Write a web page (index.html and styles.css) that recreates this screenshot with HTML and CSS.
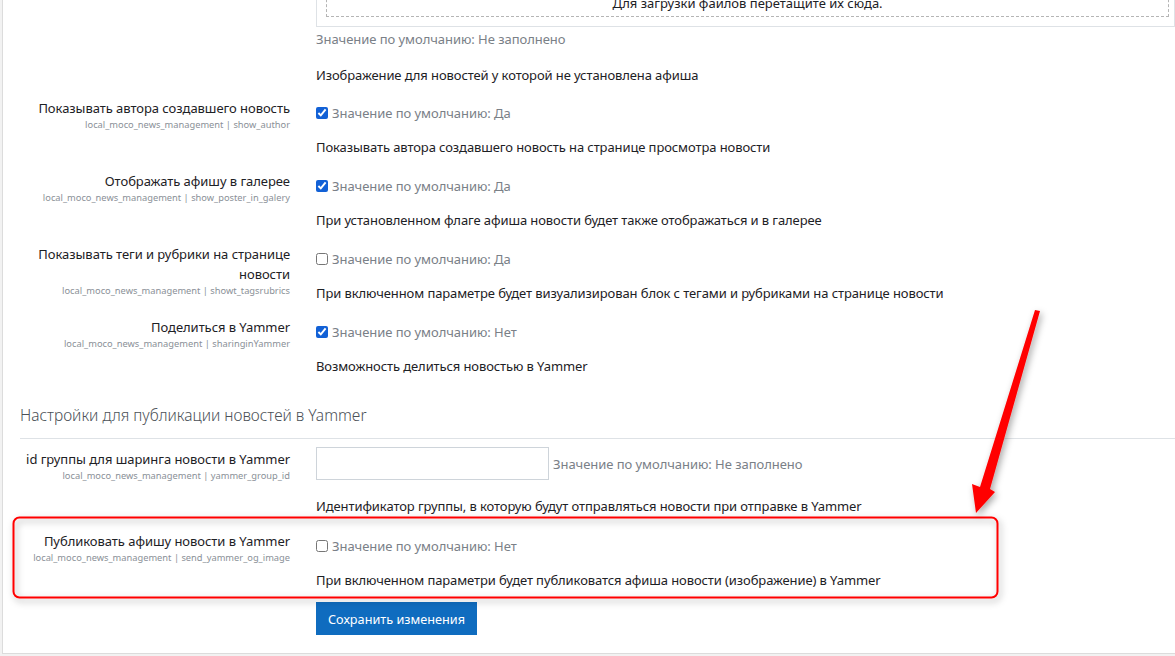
FILE: index.html
```html
<!DOCTYPE html>
<html lang="ru">
<head>
<meta charset="utf-8">
<title>Настройки новостей</title>
<link rel="stylesheet" href="styles.css">
</head>
<body>
<div class="card">
  <div class="setting setting-file">
    <div class="s-label"></div>
    <div class="s-body">
      <div class="filemanager">
        <div class="fm-drop"><span>Для загрузки файлов перетащите их сюда.</span></div>
      </div>
      <div class="default plain">Значение по умолчанию: Не заполнено</div>
      <div class="desc desc-file">Изображение для новостей у которой не установлена афиша</div>
    </div>
  </div>

  <div class="setting">
    <div class="s-label">
      <div class="s-title">Показывать автора создавшего новость</div>
      <div class="s-key">local_moco_news_management | show_author</div>
    </div>
    <div class="s-body">
      <label class="control"><input type="checkbox" checked><span class="default">Значение по умолчанию: Да</span></label>
      <div class="desc">Показывать автора создавшего новость на странице просмотра новости</div>
    </div>
  </div>

  <div class="setting">
    <div class="s-label">
      <div class="s-title">Отображать афишу в галерее</div>
      <div class="s-key">local_moco_news_management | show_poster_in_galery</div>
    </div>
    <div class="s-body">
      <label class="control"><input type="checkbox" checked><span class="default">Значение по умолчанию: Да</span></label>
      <div class="desc">При установленном флаге афиша новости будет также отображаться и в галерее</div>
    </div>
  </div>

  <div class="setting">
    <div class="s-label">
      <div class="s-title">Показывать теги и рубрики на странице новости</div>
      <div class="s-key">local_moco_news_management | showt_tagsrubrics</div>
    </div>
    <div class="s-body">
      <label class="control"><input type="checkbox"><span class="default">Значение по умолчанию: Да</span></label>
      <div class="desc">При включенном параметре будет визуализирован блок с тегами и рубриками на странице новости</div>
    </div>
  </div>

  <div class="setting">
    <div class="s-label">
      <div class="s-title">Поделиться в Yammer</div>
      <div class="s-key">local_moco_news_management | sharinginYammer</div>
    </div>
    <div class="s-body">
      <label class="control"><input type="checkbox" checked><span class="default">Значение по умолчанию: Нет</span></label>
      <div class="desc">Возможность делиться новостью в Yammer</div>
    </div>
  </div>

  <h3 class="section-title">Настройки для публикации новостей в Yammer</h3>
  <div class="section-rule"></div>

  <div class="setting setting-text">
    <div class="s-label">
      <div class="s-title">id группы для шаринга новости в Yammer</div>
      <div class="s-key">local_moco_news_management | yammer_group_id</div>
    </div>
    <div class="s-body">
      <div class="text-control"><input type="text" class="text-input"><span class="default">Значение по умолчанию: Не заполнено</span></div>
      <div class="desc desc-text">Идентификатор группы, в которую будут отправляться новости при отправке в Yammer</div>
    </div>
  </div>

  <div class="setting setting-last">
    <div class="s-label">
      <div class="s-title">Публиковать афишу новости в Yammer</div>
      <div class="s-key">local_moco_news_management | send_yammer_og_image</div>
    </div>
    <div class="s-body">
      <label class="control"><input type="checkbox"><span class="default">Значение по умолчанию: Нет</span></label>
      <div class="desc">При включенном параметри будет публиковатся афиша новости (изображение) в Yammer</div>
    </div>
  </div>

  <div class="actions">
    <div></div>
    <div><button class="btn-save" type="button">Сохранить изменения</button></div>
  </div>
</div>

<svg class="annotation" width="1175" height="656" viewBox="0 0 1175 656" aria-hidden="true">
  <defs>
    <filter id="shadow" x="-20%" y="-20%" width="140%" height="140%">
      <feDropShadow dx="2" dy="3" stdDeviation="3.5" flood-color="#000" flood-opacity="0.35"/>
    </filter>
  </defs>
  <rect x="13.5" y="517.5" width="984" height="80" rx="6" ry="6" fill="none" stroke="#ff0000" stroke-width="2" filter="url(#shadow)"/>
  <polygon points="1035,310 1040,311 990,489 995,492 976,513 972,484 980,487" fill="#ff0000" filter="url(#shadow)"/>
</svg>
</body>
</html>
```

FILE: styles.css
```css
html, body {
  margin: 0;
  padding: 0;
}

body {
  background: #f2f2f2;
  font-family: "Noto Sans", "Open Sans", sans-serif;
  color: #1d2125;
  overflow: hidden;
  position: relative;
  height: 656px;
}

.card {
  margin: -60px 0 0 2px;
  background: #fff;
  border-left: 1px solid #dcdcdc;
  border-bottom: 1px solid #dcdcdc;
  padding: 0 0 18px 17px;
}

.setting {
  display: grid;
  grid-template-columns: 270px 1fr;
  column-gap: 26px;
  margin-bottom: 14px;
}

.s-label {
  text-align: right;
}

.s-title {
  font-size: 13px;
  line-height: 20px;
  letter-spacing: -0.05px;
}

.s-key {
  font-size: 9.3px;
  line-height: 14px;
  color: #8a9097;
}

.s-body {
  padding-top: 5px;
  min-width: 0;
}

.control {
  display: flex;
  align-items: center;
  height: 20px;
}

.control input {
  width: 12px;
  height: 12px;
  margin: 0 4px 0 0;
  accent-color: #1261d6;
}

.default {
  font-size: 13px;
  line-height: 20px;
  color: #7a8087;
  letter-spacing: -0.05px;
}

.desc {
  margin-top: 14px;
  font-size: 13px;
  line-height: 20px;
  color: #1d2125;
  letter-spacing: -0.1px;
}

/* file manager row */
.setting-file {
  margin-bottom: 13px;
}

.setting-file .s-body {
  padding-top: 0;
}

.filemanager {
  border: 1px solid #dee2e6;
  padding: 9px 5px 9px 9px;
}

.fm-drop {
  border: 1px dashed #b5b5b5;
  height: 65px;
  padding: 0;
  display: flex;
  align-items: flex-end;
  justify-content: center;
}

.fm-drop span {
  font-size: 13px;
  line-height: 20px;
  padding-bottom: 3px;
  color: #1d2125;
}

.default.plain {
  margin-top: 2px;
}

.desc-file {
  margin-top: 16px;
}

/* section */
.section-title {
  margin: 28px 0 12px;
  font-size: 15.5px;
  line-height: 22px;
  font-weight: 300;
  color: #4b5157;
}

.section-rule {
  border-top: 1px solid #dee2e6;
}

.setting-text {
  margin-top: 8px;
  margin-bottom: 15px;
}

.setting-text .s-label {
  padding-top: 2px;
}

.setting-text .s-body {
  padding-top: 0;
}

.text-control {
  display: flex;
  align-items: center;
  height: 33px;
}

.text-input {
  box-sizing: border-box;
  width: 233px;
  height: 33px;
  border: 1px solid #ced4da;
  margin: 0 4px 0 0;
  padding: 0 8px;
  background: #fff;
}

.desc-text {
  margin-top: 16px;
}

.setting-last {
  margin-bottom: 12px;
}

.actions {
  display: grid;
  grid-template-columns: 270px 1fr;
  column-gap: 26px;
}

.btn-save {
  height: 33px;
  width: 161px;
  border: 0;
  background: #0f6cbf;
  color: #fff;
  font-family: "Noto Sans", "Open Sans", sans-serif;
  font-size: 12.7px;
  padding: 0;
  cursor: pointer;
}

.annotation {
  position: absolute;
  left: 0;
  top: 0;
  pointer-events: none;
}
```
